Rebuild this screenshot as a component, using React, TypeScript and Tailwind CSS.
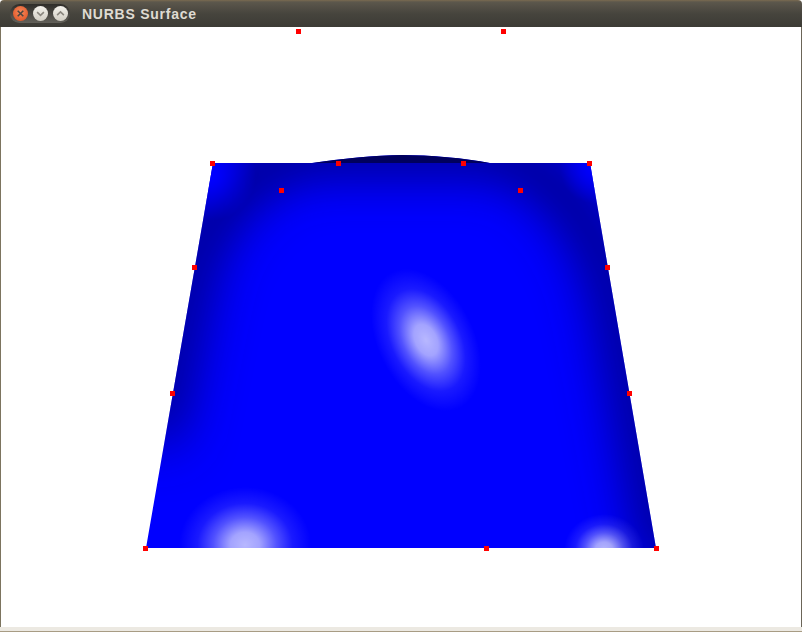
const controlPoints = [
  [298, 31], [503, 31],
  [212, 163], [338, 163], [463, 163], [589, 163],
  [281, 190], [520, 190],
  [194, 267], [607, 267],
  [172, 393], [629, 393],
  [145, 548], [486, 548], [656, 548],
];

const surfacePath =
  "M213 163 L312 163 C340 159 375 155 402 155 C430 155 465 158 490 163 L590 163 L656 548 L146 548 Z";
const bumpPath = "M312 163 C340 159 375 155 402 155 C430 155 465 158 490 163 Z";

function Surface() {
  return (
    <svg width="800" height="600" viewBox="1 27 800 600" className="block">
      <defs>
        <clipPath id="surface">
          <path d={surfacePath} shapeRendering="crispEdges" />
        </clipPath>
        <filter id="soft" x="-30%" y="-30%" width="160%" height="160%">
          <feGaussianBlur stdDeviation="27" />
        </filter>
        <radialGradient id="cornerL" gradientUnits="userSpaceOnUse" cx="210" cy="175" r="46">
          <stop offset="0.1" stopColor="#0000ff" />
          <stop offset="1" stopColor="#0000ff" stopOpacity="0" />
        </radialGradient>
        <radialGradient id="cornerR" gradientUnits="userSpaceOnUse" cx="596" cy="168" r="36">
          <stop offset="0.1" stopColor="#0000ff" />
          <stop offset="1" stopColor="#0000ff" stopOpacity="0" />
        </radialGradient>
        <radialGradient id="glow">
          <stop offset="0" stopColor="#ffffff" stopOpacity="0.72" />
          <stop offset="0.22" stopColor="#ffffff" stopOpacity="0.64" />
          <stop offset="0.48" stopColor="#ffffff" stopOpacity="0.32" />
          <stop offset="0.72" stopColor="#ffffff" stopOpacity="0.1" />
          <stop offset="1" stopColor="#ffffff" stopOpacity="0" />
        </radialGradient>
      </defs>
      <g clipPath="url(#surface)">
        <rect x="100" y="140" width="600" height="420" fill="#0000ff" />
        <path
          d="M155 440 L185 290 Q205 185 300 150 L500 150 Q590 185 618 300 L670 570"
          fill="none"
          stroke="#000060"
          strokeWidth="36"
          filter="url(#soft)"
        />
        <path d="M270 165 L540 165" fill="none" stroke="#000060" strokeWidth="26" filter="url(#soft)" />
        <rect x="100" y="140" width="600" height="120" fill="url(#cornerL)" />
        <rect x="500" y="140" width="200" height="120" fill="url(#cornerR)" />
        <path d={bumpPath} fill="#00005c" />
        <ellipse cx="0" cy="0" rx="48" ry="76" fill="url(#glow)" transform="translate(426 340) rotate(-27)" />
        <ellipse cx="245" cy="545" rx="66" ry="58" fill="url(#glow)" />
        <ellipse cx="604" cy="550" rx="40" ry="36" fill="url(#glow)" />
      </g>
      {controlPoints.map(([x, y]) => (
        <rect key={`${x}-${y}`} x={x - 2} y={y - 2} width="5" height="5" fill="#ff0000" />
      ))}
    </svg>
  );
}

function TitleButton({ kind }: { kind: "close" | "min" | "max" }) {
  const face =
    kind === "close"
      ? "bg-[radial-gradient(circle_at_50%_40%,#f58a5c,#dc4a1c)]"
      : "bg-[linear-gradient(#f4f2ec,#d2cec4)]";
  return (
    <span className={`flex h-[15px] w-[15px] items-center justify-center rounded-full ${face}`}>
      <svg width="9" height="9" viewBox="0 0 8 8" fill="none" stroke="#4a4640" strokeWidth="1.4">
        {kind === "close" && <path d="M1.5 1.5 L6.5 6.5 M6.5 1.5 L1.5 6.5" />}
        {kind === "min" && <path d="M1 2.8 L4 5.6 L7 2.8" stroke="#8a867e" />}
        {kind === "max" && <path d="M1 5.4 L4 2.6 L7 5.4" stroke="#8a867e" />}
      </svg>
    </span>
  );
}

export default function App() {
  return (
    <div className="flex h-[632px] w-[802px] flex-col overflow-hidden bg-white font-['Liberation_Sans',sans-serif]">
      <div className="flex h-[27px] shrink-0 items-center rounded-t-[4px] bg-[linear-gradient(#7a6a50_0px,#5c574c_2px,#46443d_14px,#3c3b35_27px)] pl-[10px]">
        <div className="flex h-[19px] w-[60px] items-center justify-between rounded-full bg-[linear-gradient(#2f2d29,#63615a)] px-[2.5px]">
          <TitleButton kind="close" />
          <TitleButton kind="min" />
          <TitleButton kind="max" />
        </div>
        <span className="ml-[12px] pt-[1px] text-[14px] font-bold tracking-[0.75px] text-[#dfdbd2]">NURBS Surface</span>
      </div>
      <div className="min-h-0 flex-1 border-r border-l border-r-[#6b6558] border-l-[#7c745f]">
        <Surface />
      </div>
      <div className="h-[5px] shrink-0 border-b border-b-[#a89c84] bg-[#ece9e2]" />
    </div>
  );
}
